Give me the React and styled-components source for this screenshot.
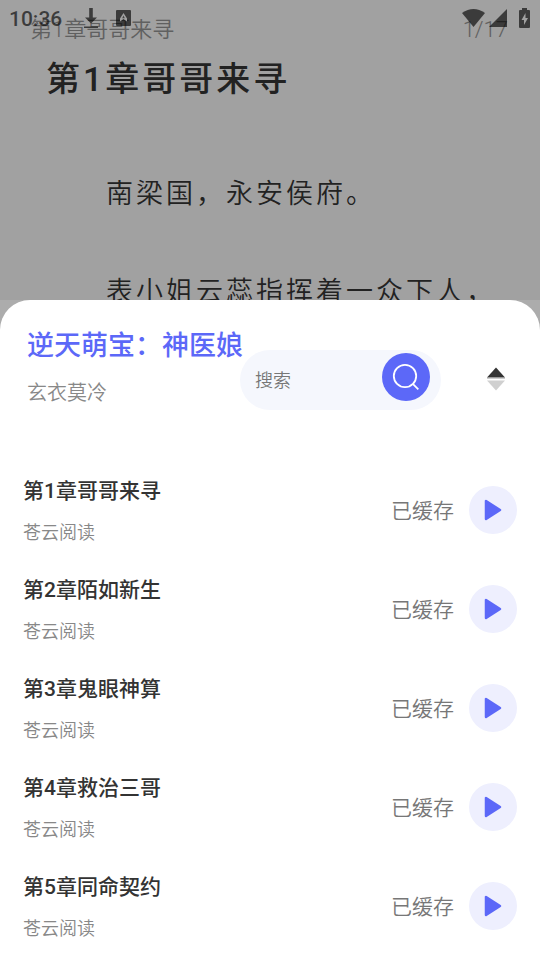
import React from "react";
import styled, { createGlobalStyle } from "styled-components";

const GlobalStyle = createGlobalStyle`
  * {
    box-sizing: border-box;
  }
  body {
    margin: 0;
    background: #a1a1a1;
    font-family: Roboto, "Noto Sans CJK SC", sans-serif;
    font-weight: 350;
  }
  h1, h2, h3, p {
    margin: 0;
  }
  button {
    padding: 0;
    border: 0;
    background: none;
    cursor: pointer;
  }
`;

const Screen = styled.div`
  position: relative;
  display: flex;
  flex-direction: column;
  min-height: 100vh;
  overflow: hidden;
`;

/* the status bar floats over the reader page */
const StatusBar = styled.div`
  position: absolute;
  top: 0;
  left: 0;
  right: 0;
  display: flex;
  align-items: center;
  height: 36px;
  padding: 0 10px 0 9px;
  color: rgba(0, 0, 0, 0.63);
`;

const Clock = styled.span`
  width: 75px;
  padding-top: 2px;
  font-size: 21px;
  line-height: 24px;
  font-weight: 500;
`;

const StatusIcons = styled.div`
  display: flex;
  align-items: center;
  gap: ${(props) => props.$gap}px;
  margin-left: ${(props) => (props.$end ? "auto" : "0")};
`;

const ReaderPage = styled.main`
  height: 300px;
  overflow: hidden;
  color: #222;
`;

const ReaderHeader = styled.div`
  display: flex;
  justify-content: space-between;
  padding: 14px 32px 0 30px;
  font-size: 22px;
  line-height: 32px;
  color: #606060;
`;

const ReaderTitle = styled.h1`
  padding: 8px 46px 0;
  font-size: 34px;
  line-height: 50px;
  font-weight: 500;
  letter-spacing: 3px;
`;

const ReaderText = styled.div`
  display: grid;
  gap: 68px;
  padding: 75px 0 0 106px;
`;

const Paragraph = styled.p`
  font-size: 27px;
  line-height: 30px;
  letter-spacing: 3px;
  white-space: nowrap;
`;

const SheetBackdrop = styled.div`
  display: flex;
  flex: 1;
  flex-direction: column;
  background: #acacac;
`;

const Sheet = styled.section`
  flex: 1;
  border-radius: 30px 30px 0 0;
  background: #fff;
`;

const SheetHeader = styled.header`
  display: flex;
  height: 160px;
  padding: 25px 32px 0 27px;
`;

const BookInfo = styled.div`
  flex: 1;
  min-width: 0;
  white-space: nowrap;
`;

const BookName = styled.h2`
  font-size: 27px;
  line-height: 42px;
  font-weight: 500;
  color: #5c68f8;
`;

const Author = styled.p`
  padding-top: 11px;
  font-size: 20px;
  line-height: 30px;
  color: #888;
`;

const SearchBox = styled.form`
  display: flex;
  align-items: center;
  width: 201px;
  height: 60px;
  margin-top: 25px;
  padding: 0 11px 0 15px;
  border-radius: 30px;
  background: #f5f7fd;
`;

const SearchInput = styled.input`
  flex: 1;
  min-width: 0;
  padding: 0;
  border: 0;
  outline: 0;
  background: none;
  font-family: inherit;
  font-size: 18px;
  font-weight: inherit;
  color: #333;
  &::placeholder {
    color: #777;
    opacity: 1;
  }
`;

const RoundButton = styled.button`
  display: flex;
  flex: none;
  align-items: center;
  justify-content: center;
  width: 48px;
  height: 48px;
  border-radius: 50%;
  background: ${(props) => (props.$primary ? "#5c68f8" : "#eeeffe")};
`;

const SearchButton = styled(RoundButton)`
  align-self: flex-start;
  margin-top: 3px;
`;

const SortButton = styled.button`
  align-self: flex-start;
  width: 24px;
  height: 30px;
  margin: 39px 0 0 43px;
`;

const ChapterList = styled.ul`
  margin: 0;
  padding: 0 23px;
  list-style: none;
`;

const ChapterRow = styled.li`
  display: flex;
  align-items: center;
  height: 99px;
`;

const ChapterInfo = styled.div`
  flex: 1;
  min-width: 0;
  padding-top: 2px;
`;

const ChapterName = styled.h3`
  font-size: 21px;
  line-height: 32px;
  font-weight: 500;
  color: #333;
`;

const Source = styled.p`
  padding-top: 12px;
  font-size: 18px;
  line-height: 28px;
  color: #888;
`;

const CacheState = styled.span`
  padding: 2px 15px 0 0;
  font-size: 21px;
  line-height: 30px;
  color: #777;
`;

const chapters = [
  "第1章哥哥来寻",
  "第2章陌如新生",
  "第3章鬼眼神算",
  "第4章救治三哥",
  "第5章同命契约",
];

const DownloadIcon = () => (
  <svg width="14" height="21" viewBox="0 0 14 21" fill="currentColor">
    <path d="M5.200 0h3.600v9.500H13L7 15.500 1 9.500h4.200z" />
    <path d="M0 18.500h14v1.500H0z" />
  </svg>
);

const AppIcon = () => (
  <svg width="15" height="16" viewBox="0 0 15 16">
    <rect width="15" height="16" rx="1" fill="currentColor" />
    <path
      d="M4 11.500V8.500L7.500 3l3.500 5.500v3L7.500 9z"
      fill="#a1a1a1"
    />
    <path d="M7.500 5.500l1.300 2.800H6.200z" fill="#454545" />
  </svg>
);

const WifiIcon = () => (
  <svg width="23" height="18" viewBox="0 0 23 18" fill="currentColor">
    <path d="M0 4Q11.500-4 23 4L11.500 18z" />
  </svg>
);

const SignalIcon = () => (
  <svg width="18" height="18" viewBox="0 0 18 18" fill="currentColor">
    <path d="M18 0v18H0z" />
  </svg>
);

const BatteryIcon = () => (
  <svg width="19" height="20" viewBox="-8 0 19 20">
    <path
      d="M3 0h5v2h2q1 0 1 1v16q0 1-1 1H1q-1 0-1-1V3q0-1 1-1h2z"
      fill="currentColor"
    />
    <path d="M6.500 5v5h2.500L5 17v-5H2.500z" fill="#a1a1a1" />
  </svg>
);

const SearchIcon = () => (
  <svg
    width="28"
    height="28"
    viewBox="0 0 28 28"
    fill="none"
    stroke="#fff"
    strokeWidth="1.800"
  >
    <circle cx="13" cy="13" r="11.200" />
    <path d="M20.800 20.800l5.500 5.500" />
  </svg>
);

const SortIcon = () => (
  <svg width="24" height="30" viewBox="0 0 24 30">
    <path d="M3 13.500L12 3.500l9 10z" fill="#333" />
    <path d="M3 16.500h18l-9 10z" fill="#d0d0d0" />
    <path d="M3 13.500h18v1H3z" fill="#999" />
  </svg>
);

const PlayIcon = () => (
  <svg width="18" height="22" viewBox="0 0 18 22">
    <path
      d="M2 2v18L16 11z"
      fill="#5c68f8"
      stroke="#5c68f8"
      strokeWidth="2.500"
      strokeLinejoin="round"
    />
  </svg>
);

const App = () => {
  return (
    <Screen>
      <GlobalStyle />
      <ReaderPage>
        <ReaderHeader>
          <span>第1章哥哥来寻</span>
          <span>1/17</span>
        </ReaderHeader>
        <ReaderTitle>第1章哥哥来寻</ReaderTitle>
        <ReaderText>
          <Paragraph>南梁国，永安侯府。</Paragraph>
          <Paragraph>表小姐云蕊指挥着一众下人，</Paragraph>
        </ReaderText>
      </ReaderPage>
      <StatusBar>
        <Clock>10:36</Clock>
        <StatusIcons $gap={18}>
          <DownloadIcon />
          <AppIcon />
        </StatusIcons>
        <StatusIcons $end $gap={4}>
          <WifiIcon />
          <SignalIcon />
          <BatteryIcon />
        </StatusIcons>
      </StatusBar>
      <SheetBackdrop>
        <Sheet>
          <SheetHeader>
            <BookInfo>
              <BookName>逆天萌宝：神医娘</BookName>
              <Author>玄衣莫冷</Author>
            </BookInfo>
            <SearchBox onSubmit={(e) => e.preventDefault()}>
              <SearchInput placeholder="搜索" aria-label="搜索" />
              <SearchButton $primary type="submit" aria-label="搜索">
                <SearchIcon />
              </SearchButton>
            </SearchBox>
            <SortButton type="button" aria-label="排序">
              <SortIcon />
            </SortButton>
          </SheetHeader>
          <ChapterList>
            {chapters.map((name) => (
              <ChapterRow key={name}>
                <ChapterInfo>
                  <ChapterName>{name}</ChapterName>
                  <Source>苍云阅读</Source>
                </ChapterInfo>
                <CacheState>已缓存</CacheState>
                <RoundButton type="button" aria-label={"播放" + name}>
                  <PlayIcon />
                </RoundButton>
              </ChapterRow>
            ))}
          </ChapterList>
        </Sheet>
      </SheetBackdrop>
    </Screen>
  );
};

export default App;
